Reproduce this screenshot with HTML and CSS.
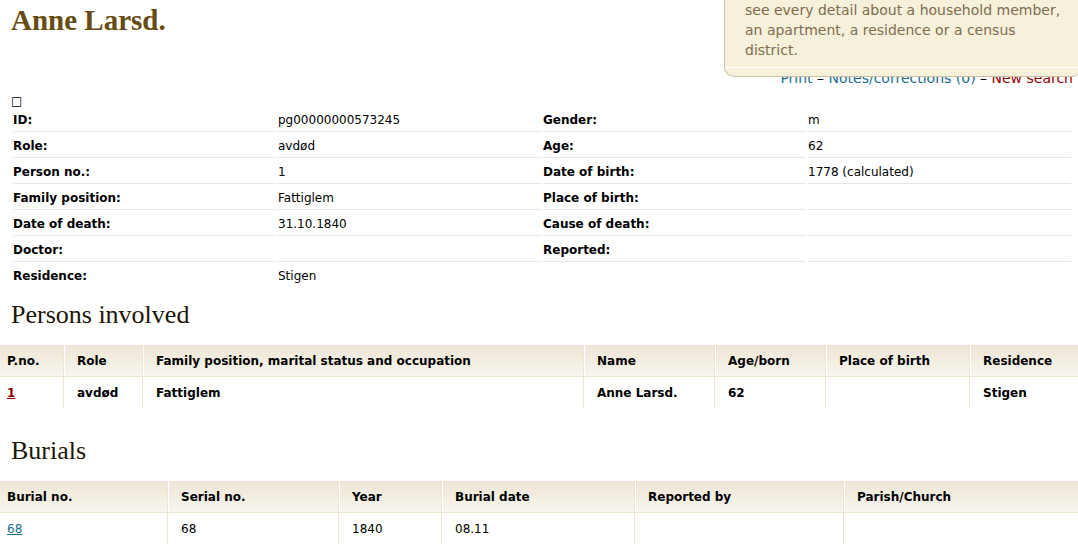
FILE: index.html
```html
<!DOCTYPE html>
<html lang="en">
<head>
    <meta charset="UTF-8">
    <meta name="viewport" content="width=device-width, initial-scale=1.0">
    <title>Anne Larsd.</title>
    <link rel="stylesheet" href="styles.css">
</head>
<body>
    <div class="page">
        <div class="tip">
            <p>see every detail about a household member, an apartment, a residence or a census district.</p>
        </div>

        <h1>Anne Larsd.</h1>
        <div class="actions">
            <a href="#print">Print</a> – <a href="#notes">Notes/corrections (0)</a> – <a href="#search" class="red">New search</a>
        </div>

        <div class="marker">□</div>
        <table class="details">
            <tbody>
                <tr><th>ID:</th><td>pg00000000573245</td><th>Gender:</th><td>m</td></tr>
                <tr><th>Role:</th><td>avdød</td><th>Age:</th><td>62</td></tr>
                <tr><th>Person no.:</th><td>1</td><th>Date of birth:</th><td>1778 (calculated)</td></tr>
                <tr><th>Family position:</th><td>Fattiglem</td><th>Place of birth:</th><td></td></tr>
                <tr><th>Date of death:</th><td>31.10.1840</td><th>Cause of death:</th><td></td></tr>
                <tr><th>Doctor:</th><td></td><th>Reported:</th><td></td></tr>
                <tr><th>Residence:</th><td>Stigen</td></tr>
            </tbody>
        </table>

        <h2>Persons involved</h2>
        <table class="list persons">
            <thead>
                <tr>
                    <th class="pno">P.no.</th>
                    <th class="role">Role</th>
                    <th>Family position, marital status and occupation</th>
                    <th class="name">Name</th>
                    <th class="age">Age/born</th>
                    <th class="place">Place of birth</th>
                    <th class="residence">Residence</th>
                </tr>
            </thead>
            <tbody>
                <tr>
                    <td><a href="#person1" class="red">1</a></td>
                    <td>avdød</td>
                    <td>Fattiglem</td>
                    <td>Anne Larsd.</td>
                    <td>62</td>
                    <td></td>
                    <td>Stigen</td>
                </tr>
            </tbody>
        </table>

        <h2>Burials</h2>
        <table class="list burials">
            <thead>
                <tr>
                    <th class="burial">Burial no.</th>
                    <th class="serial">Serial no.</th>
                    <th class="year">Year</th>
                    <th class="date">Burial date</th>
                    <th class="reported">Reported by</th>
                    <th>Parish/Church</th>
                </tr>
            </thead>
            <tbody>
                <tr>
                    <td><a href="#burial68">68</a></td>
                    <td>68</td>
                    <td>1840</td>
                    <td>08.11</td>
                    <td></td>
                    <td></td>
                </tr>
            </tbody>
        </table>
    </div>
</body>
</html>
```

FILE: styles.css
```css
body {
    margin: 0;
    background-color: #fff;
    color: #000;
    font-family: Verdana, "DejaVu Sans", sans-serif;
    font-size: 12px;
    line-height: 17px;
}
.page {
    position: relative;
    overflow: hidden;
    padding-top: 4px;
}
a {
    color: #1c6d8c;
}
a.red {
    color: #940000;
}
h1, h2 {
    margin: 0;
    padding-left: 11px;
    font-family: Georgia, "Liberation Serif", serif;
}
h1 {
    color: #664b12;
    font-size: 29px;
    line-height: 32px;
}
h2 {
    color: #1d1606;
    font-size: 26px;
    font-weight: normal;
    line-height: 30px;
    padding-top: 10px;
    padding-bottom: 15px;
}

/* help box hanging over the top right corner */
.tip {
    position: absolute;
    top: 0;
    right: -4px;
    width: 358px;
    box-sizing: border-box;
    border: 1px solid #c9c2a5;
    border-top: 0;
    border-radius: 0 0 10px 10px;
    background-color: #f7f0da;
    color: #7f6c4e;
    font-size: 14px;
    line-height: 20px;
    padding-bottom: 8px;
}
.tip p {
    margin: 0;
    padding: 0 10px 7px 20px;
    border-bottom: 1px solid #fff;
}
.actions {
    margin-top: 32px;
    padding-right: 5px;
    font-size: 14px;
    line-height: 20px;
    text-align: right;
}
.actions a {
    text-decoration: none;
}
.marker {
    margin-top: 8px;
    padding-left: 11px;
    line-height: 10px;
}

.details {
    width: calc(100% - 16px);
    margin: 0 5px 0 11px;
    border-spacing: 2px;
    table-layout: fixed;
}
.details th, .details td {
    height: 17px;
    padding: 4px 0 2px;
    border-bottom: 1px solid #ebe6dc;
    text-align: left;
}
.details tr:last-child th, .details tr:last-child td {
    border-bottom-color: transparent;
}

.list {
    width: 100%;
    border-collapse: separate;
    border-spacing: 0;
    table-layout: fixed;
    margin-bottom: 18px;
}
.list th, .list td {
    box-sizing: border-box;
    height: 31px;
    padding: 8px 0 6px 13px;
    border-right: 1px solid #ede5d3;
    text-align: left;
}
.list th {
    height: 32px;
    padding-left: 12px;
    border-left: 1px solid #fff;
    border-bottom: 1px solid #ede5d3;
    background: linear-gradient(#eee6d6, #f8f5ee);
}
.list th:first-child, .list td:first-child {
    border-left: 0;
    padding-left: 7px;
}
.list th:last-child, .list td:last-child {
    border-right: 0;
}
.persons td {
    font-weight: bold;
}

.pno { width: 64px; }
.role { width: 79px; }
.name { width: 131px; }
.age { width: 111px; }
.place { width: 144px; }
.residence { width: 108px; }

.burial { width: 168px; }
.serial { width: 171px; }
.year { width: 103px; }
.date { width: 193px; }
.reported { width: 209px; }
```
